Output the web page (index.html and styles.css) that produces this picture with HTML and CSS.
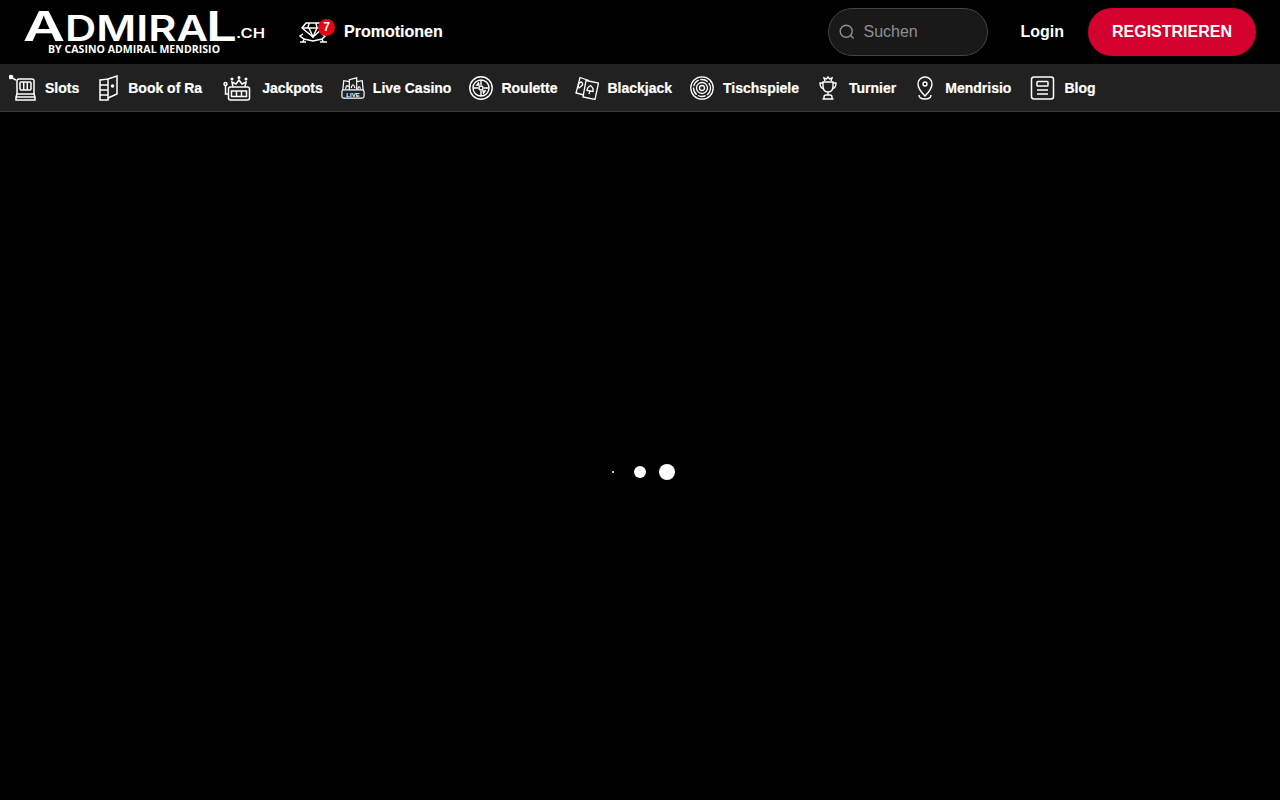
FILE: index.html
```html
<!DOCTYPE html>
<html lang="de">
<head>
<meta charset="utf-8">
<title>Admiral.ch</title>
<link rel="stylesheet" href="styles.css">
</head>
<body>
<header class="topbar">
  <a class="logo" href="#">
    <svg width="242" height="64" viewBox="0 0 242 64">
      <text class="logo-big" x="-1" y="41" textLength="42" lengthAdjust="spacingAndGlyphs">A</text>
      <text class="logo-mid" x="41" y="41" textLength="143" lengthAdjust="spacingAndGlyphs">DMIRA</text>
      <text class="logo-big" x="182" y="41" textLength="31" lengthAdjust="spacingAndGlyphs">L</text>
      <text class="logo-ch" x="212" y="38" textLength="29" lengthAdjust="spacingAndGlyphs">.CH</text>
      <text class="logo-sub" x="24" y="53" textLength="172" lengthAdjust="spacing">BY CASINO ADMIRAL MENDRISIO</text>
    </svg>
  </a>
  <a class="promo" href="#">
    <span class="promo-icon">
      <svg width="30" height="24" viewBox="0 0 30 24" fill="none" stroke="#fff" stroke-width="1.500">
        <path d="M7 3h13l4 5-10 9L3 8z"/><path d="M3 8h21M10 8l4 9 4-9M10 3 9 8M17 3l1 5"/>
        <path d="M4 14 1 16l4 3 9 2 9-2 3-3-3-2M5 19l-1 3M23 19l1 3M1 22h6M21 22h7"/>
      </svg>
      <span class="badge">7</span>
    </span>
    <span>Promotionen</span>
  </a>
  <div class="top-right">
    <label class="search">
      <svg width="16" height="16" viewBox="0 0 16 16" fill="none" stroke="#8f8f8f" stroke-width="1.400"><circle cx="7.200" cy="7.200" r="6"/><path d="m11.600 11.600 3 3"/></svg>
      <span>Suchen</span>
    </label>
    <a class="login" href="#">Login</a>
    <a class="register" href="#">REGISTRIEREN</a>
  </div>
</header>
<nav class="menu">
  <a class="item" href="#">
    <svg width="28" height="28" viewBox="0 0 28 28" fill="none" stroke="#fff" stroke-width="1.500">
      <circle cx="2" cy="3" r="1.600" fill="#fff"/><path d="M3 4l4 2"/>
      <path d="M8 20V7q0-2 2-2h13q2 0 2 2v13"/><rect x="11" y="8" width="11" height="8" rx="1"/><path d="M14.700 8v8M18.300 8v8"/>
      <path d="M8 20h17l1 3v3H7v-3zM7 23h19"/>
    </svg>
    <span>Slots</span>
  </a>
  <a class="item" href="#">
    <svg width="23" height="26" viewBox="0 0 23 26" fill="none" stroke="#fff" stroke-width="1.500">
      <path d="M11 4 20 1v18l-9 4"/><path d="M3 5 11 4v21H3zM3 10h8M3 15h8M3 20h8"/><circle cx="15.500" cy="11" r="1" fill="#fff"/>
    </svg>
    <span>Book of Ra</span>
  </a>
  <a class="item" href="#">
    <svg width="34" height="26" viewBox="0 0 34 26" fill="none" stroke="#fff" stroke-width="1.500">
      <circle cx="5.500" cy="9" r="1.500"/><path d="M5.500 11v8h3"/>
      <rect x="8.500" y="12" width="21" height="13" rx="2"/><rect x="11.500" y="16" width="15" height="5.500"/><path d="M16.500 16v5.500M21.500 16v5.500"/>
      <path d="M13 12 12 7l4 2 3-4 3 4 4-2-1 5"/><circle cx="19" cy="2.500" r=".8" fill="#fff"/><circle cx="12" cy="4" r=".8" fill="#fff"/><circle cx="26" cy="4" r=".8" fill="#fff"/>
    </svg>
    <span>Jackpots</span>
  </a>
  <a class="item" href="#">
    <svg width="24" height="24" viewBox="0 0 26 24" fill="none" stroke="#fff" stroke-width="1.300">
      <rect x="1" y="14" width="24" height="9" rx="2"/><path d="M2 14 3 4l6 1M24 14 23 4l-6 1M9 14V3l8-2v13"/>
      <path d="M5 13q1-6 3-2M11 12q2-7 4 0M18 13q2-5 3 0"/>
      <text class="live" x="13" y="21.500" text-anchor="middle">LIVE</text>
    </svg>
    <span>Live Casino</span>
  </a>
  <a class="item" href="#">
    <svg width="24" height="24" viewBox="0 0 24 24" fill="none" stroke="#fff" stroke-width="1.400">
      <circle cx="12" cy="12" r="11.200"/><circle cx="12" cy="12" r="8"/><circle cx="12" cy="12" r="2"/>
      <path d="M12 4v5M12 15v5M4 12h5M15 12h5M9.500 7 8 9h2zM14.500 17l1.500-2h-2z"/>
    </svg>
    <span>Roulette</span>
  </a>
  <a class="item" href="#">
    <svg width="24" height="24" viewBox="0 0 24 24" fill="none" stroke="#fff" stroke-width="1.300">
      <path d="M14 4.500 5 1.500 1 17l8 2"/><path d="M11 4.500 23.500 7 20 23.500 8 21z"/><path d="M5.500 6q2.500 0 2 3-2 2-3.500 3-2-3 1.500-6zM15.500 9.500q3.500 3 2.500 6l-6-1q0-3 3.500-5zM15 15l-1 3"/>
    </svg>
    <span>Blackjack</span>
  </a>
  <a class="item" href="#">
    <svg width="25" height="24" viewBox="0 0 25 24" fill="none" stroke="#fff" stroke-width="1.300">
      <circle cx="12" cy="12" r="11.200"/><circle cx="12" cy="12" r="8.500" stroke-dasharray="8 1.500"/><circle cx="12" cy="12" r="5.500"/><circle cx="12" cy="12" r="2.500"/>
    </svg>
    <span>Tischspiele</span>
  </a>
  <a class="item" href="#">
    <svg width="24" height="24" viewBox="1 0 24 24" fill="none" stroke="#fff" stroke-width="1.400">
      <path d="M7 6h10v4q0 6-5 6t-5-6zM7 7H4q0 5 4 6M17 7h3q0 5-4 6M12 16v3M8 23v-2q0-2 2-2h4q2 0 2 2v2zM6.500 23h11"/>
      <path d="M9 5 8 2l2.500 1L12 1l1.500 2L16 2l-1 3"/>
    </svg>
    <span>Turnier</span>
  </a>
  <a class="item" href="#">
    <svg width="23" height="24" viewBox="1 0 23 24" fill="none" stroke="#fff" stroke-width="1.400">
      <path d="M12 20Q5 13 5 8a7 7 0 0 1 14 0Q19 13 12 20z"/><circle cx="12" cy="8" r="2"/><path d="M6 19q0 4 6 4t6-4"/>
    </svg>
    <span>Mendrisio</span>
  </a>
  <a class="item" href="#">
    <svg width="27" height="24" viewBox="0 0 27 24" fill="none" stroke="#fff" stroke-width="1.500">
      <rect x="2.500" y="1" width="22" height="22" rx="2.500"/><rect x="8" y="5.500" width="11" height="4.500" rx=".8"/><path d="M8 14h11M8 18h11"/>
    </svg>
    <span>Blog</span>
  </a>
</nav>
<main class="stage">
  <div class="loader">
    <span class="slot"><i class="dot d1"></i></span>
    <span class="slot"><i class="dot d2"></i></span>
    <span class="slot"><i class="dot d3"></i></span>
  </div>
</main>
</body>
</html>
```
FILE: styles.css
```css
* { box-sizing: border-box; }
html, body { margin: 0; height: 100%; }
body {
  background: #000;
  color: #fff;
  font-family: "Liberation Sans", Arial, sans-serif;
  display: flex;
  flex-direction: column;
  overflow: hidden;
}
a { color: inherit; text-decoration: none; }

.topbar {
  height: 64px;
  display: flex;
  align-items: center;
  padding: 0 24px;
  flex: none;
}
.logo { display: block; width: 242px; height: 64px; }
.logo svg { display: block; overflow: visible; }
.logo text { fill: #fff; font-family: Inter, sans-serif; }
.logo-big { font-size: 41px; font-weight: 600; }
.logo-mid { font-size: 36px; font-weight: 600; }
.logo-ch { font-size: 12.500px; font-weight: 600; }
.logo .logo-sub { font-family: "Open Sans", sans-serif; font-size: 10.500px; font-weight: 700; }

.promo {
  display: flex;
  align-items: center;
  gap: 15px;
  margin-left: 33px;
  font-size: 16px;
  font-weight: 700;
  -webkit-text-stroke: .15px #fff;
}
.promo-icon { position: relative; display: block; width: 30px; height: 24px; }
.promo-icon svg { display: block; }
.badge {
  position: absolute;
  left: 19px;
  top: -1px;
  width: 17px;
  height: 17px;
  border-radius: 50%;
  background: #e30613;
  font-size: 12px;
  line-height: 16px;
  text-align: center;
  -webkit-text-stroke: 0;
}

.top-right { margin-left: auto; display: flex; align-items: center; }
.search {
  width: 160px;
  height: 48px;
  display: flex;
  align-items: center;
  gap: 8px;
  padding-left: 10px;
  background: #191919;
  border: 1px solid #444;
  border-radius: 24px;
  color: #8f8f8f;
  font-size: 16px;
}
.login { margin-left: 32px; font-size: 16px; font-weight: 700; }
.register {
  margin-left: 24px;
  width: 168px;
  height: 48px;
  border-radius: 24px;
  background: #d4002d;
  font-size: 16px;
  font-weight: 700;
  line-height: 47px;
  text-align: center;
}

.menu {
  height: 48px;
  flex: none;
  display: flex;
  align-items: center;
  gap: 18px;
  padding-left: 9px;
  background: #212121;
  border-bottom: 1px solid #3a3a3a;
  font-size: 14px;
  font-weight: 700;
  -webkit-text-stroke: .2px #fff;
}
.item { display: flex; align-items: center; gap: 8px; }
.item svg { display: block; flex: none; }

.live { font: 700 6.500px "Liberation Sans", sans-serif; fill: #fff; stroke: none; }

.stage {
  flex: 1;
  display: flex;
  align-items: center;
  justify-content: center;
  padding-top: 32px;
}
.loader { display: flex; gap: 11px; }
.slot { width: 16px; height: 16px; display: flex; align-items: center; justify-content: center; }
.dot { display: block; border-radius: 50%; background: #fff; }
.d1 { width: 1.500px; height: 1.500px; }
.d2 { width: 12px; height: 12px; }
.d3 { width: 16px; height: 16px; }
```
